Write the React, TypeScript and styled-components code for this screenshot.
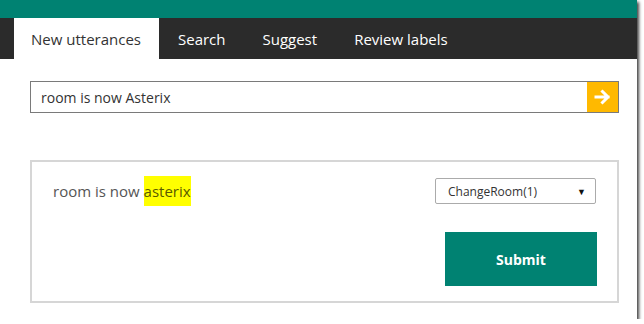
import { useState } from "react";
import styled, { createGlobalStyle } from "styled-components";

const GlobalStyle = createGlobalStyle`
  body {
    margin: 0;
    background: #ffffff;
    font-family: "Open Sans", "Liberation Sans", sans-serif;
  }
`;

const tabs = ["New utterances", "Search", "Suggest", "Review labels"];

export default function App() {
  const [active, setActive] = useState(0);

  return (
    <>
      <GlobalStyle />
      <Frame>
        <TopBar />
        <Nav>
          {tabs.map((t, i) => (
            <Tab key={t} $active={i === active} onClick={() => setActive(i)}>
              {t}
            </Tab>
          ))}
        </Nav>
        <Main>
          <SearchBox>
            <SearchInput defaultValue="room is now Asterix" />
            <GoButton aria-label="Go">
              <svg width="18" height="16" viewBox="0 0 18 16">
                <path
                  d="M2 8h12M8.5 2.5L14 8l-5.5 5.5"
                  fill="none"
                  stroke="#fff"
                  strokeWidth="3"
                  strokeLinecap="square"
                />
              </svg>
            </GoButton>
          </SearchBox>
          <Card>
            <CardRow>
              <Utterance>
                room is now <Mark>asterix</Mark>
              </Utterance>
              <Select>
                <span>ChangeRoom(1)</span>
                <Caret>▼</Caret>
              </Select>
            </CardRow>
            <SubmitRow>
              <SubmitButton>Submit</SubmitButton>
            </SubmitRow>
          </Card>
        </Main>
      </Frame>
    </>
  );
}

const Frame = styled.div`
  width: 637px;
  height: 319px;
  overflow: hidden;
  display: flex;
  flex-direction: column;
  background: #fff;
  box-shadow: 2px 2px 3px rgba(0, 0, 0, 0.75);
`;

const TopBar = styled.div`
  height: 18px;
  background: #008272;
`;

const Nav = styled.nav`
  height: 41px;
  display: flex;
  padding-left: 14px;
  background: #2b2b2b;
`;

const Tab = styled.div<{ $active: boolean }>`
  display: flex;
  align-items: center;
  padding: 0 18px 0 17px;
  font-size: 15px;
  cursor: pointer;
  color: ${(p) => (p.$active ? "#333" : "#fff")};
  background: ${(p) => (p.$active ? "#fff" : "transparent")};
  & + & {
    margin-left: 2px;
  }
`;

const Main = styled.div`
  padding: 22px 18px 0 30px;
`;

const SearchBox = styled.div`
  height: 32px;
  display: flex;
  border: 1px solid #7a7a7a;
  box-sizing: border-box;
`;

const SearchInput = styled.input`
  flex: 1;
  border: none;
  outline: none;
  padding: 0 10px;
  font-family: inherit;
  font-size: 14px;
  color: #333;
`;

const GoButton = styled.button`
  width: 31px;
  border: none;
  padding: 0;
  background: #ffb900;
  display: flex;
  align-items: center;
  justify-content: center;
`;

const Card = styled.div`
  margin-top: 47px;
  height: 143px;
  box-sizing: border-box;
  border: 2px solid #d6d6d6;
  padding: 16px 21px 15px 21px;
  display: flex;
  flex-direction: column;
`;

const CardRow = styled.div`
  display: flex;
  align-items: center;
  justify-content: space-between;
`;

const Utterance = styled.div`
  font-size: 15px;
  color: #555;
`;

const Mark = styled.span`
  background: #ffff00;
  color: #5a5a00;
  padding: 5px 0;
`;

const Select = styled.div`
  width: 161px;
  height: 26px;
  box-sizing: border-box;
  border: 1px solid #ababab;
  border-radius: 2px;
  padding: 0 9px 0 12px;
  display: flex;
  align-items: center;
  justify-content: space-between;
  font-size: 12px;
  color: #333;
`;

const Caret = styled.span`
  font-size: 9px;
  color: #111;
`;

const SubmitRow = styled.div`
  display: flex;
  justify-content: flex-end;
  margin-top: 28px;
`;

const SubmitButton = styled.button`
  width: 152px;
  height: 54px;
  margin-right: -1px;
  border: none;
  background: #008272;
  color: #fff;
  font-family: inherit;
  font-size: 14px;
  font-weight: 700;
`;
